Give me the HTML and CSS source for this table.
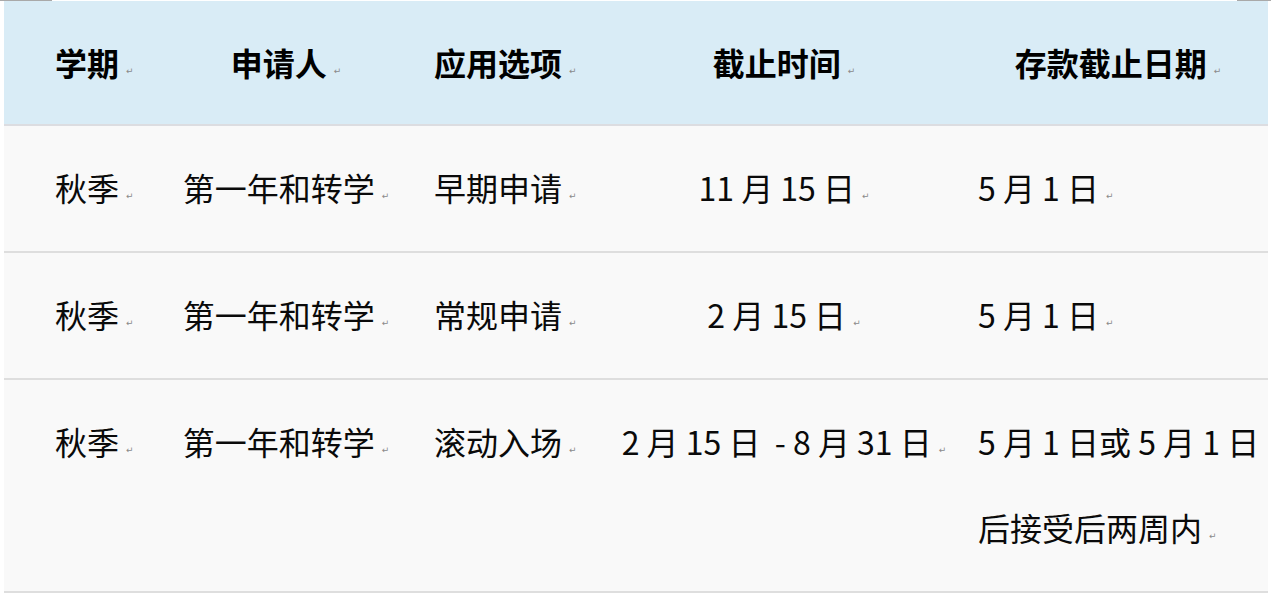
FILE: index.html
```html
<!DOCTYPE html>
<html lang="zh-CN">
<head>
<meta charset="utf-8">
<title>截止日期</title>
<link rel="stylesheet" href="styles.css">
</head>
<body>
<div class="crop crop-left"></div>
<div class="crop crop-right"></div>
<table class="deadlines">
  <colgroup>
    <col class="c1"><col class="c2"><col class="c3"><col class="c4"><col class="c5">
  </colgroup>
  <thead>
    <tr>
      <th class="left1">学期<span class="pm">↵</span></th>
      <th class="center">申请人<span class="pm">↵</span></th>
      <th class="left3">应用选项<span class="pm">↵</span></th>
      <th class="center">截止时间<span class="pm">↵</span></th>
      <th class="head5">存款截止日期<span class="pm">↵</span></th>
    </tr>
  </thead>
  <tbody>
    <tr>
      <td class="left1">秋季<span class="pm">↵</span></td>
      <td class="center">第一年和转学<span class="pm">↵</span></td>
      <td class="left3">早期申请<span class="pm">↵</span></td>
      <td class="center">11 月 15 日<span class="pm">↵</span></td>
      <td class="left5">5 月 1 日<span class="pm">↵</span></td>
    </tr>
    <tr>
      <td class="left1">秋季<span class="pm">↵</span></td>
      <td class="center">第一年和转学<span class="pm">↵</span></td>
      <td class="left3">常规申请<span class="pm">↵</span></td>
      <td class="center">2 月 15 日<span class="pm">↵</span></td>
      <td class="left5">5 月 1 日<span class="pm">↵</span></td>
    </tr>
    <tr>
      <td class="left1">秋季<span class="pm">↵</span></td>
      <td class="center">第一年和转学<span class="pm">↵</span></td>
      <td class="left3">滚动入场<span class="pm">↵</span></td>
      <td class="center">2 月 15 日 &nbsp;- 8 月 31 日<span class="pm">↵</span></td>
      <td class="left5">5 月 1 日或 5 月 1 日<br>后接受后两周内<span class="pm">↵</span></td>
    </tr>
  </tbody>
</table>
</body>
</html>
```

FILE: styles.css
```css
html, body {
  margin: 0;
  padding: 0;
  background: #ffffff;
}

body {
  position: relative;
  width: 1271px;
  height: 596px;
  overflow: hidden;
  font-family: "Noto Sans CJK SC", "Noto Sans", sans-serif;
  color: #000;
}

.crop {
  position: absolute;
  top: 0;
  height: 1px;
  background: #a9a9a9;
}
.crop-left { left: 0; width: 52px; }
.crop-right { left: 1237px; width: 34px; }

.deadlines {
  margin: 1px 0 0 4px;
  width: 1264px;
  table-layout: fixed;
  border-collapse: collapse;
  border-spacing: 0;
}

.c1 { width: 156px; }
.c2 { width: 252px; }
.c3 { width: 192px; }
.c4 { width: 360px; }
.c5 { width: 304px; }

.deadlines th,
.deadlines td {
  font-size: 32px;
  line-height: 86px;
  padding: 18px 0 21px;
  vertical-align: top;
  white-space: normal;
}

.deadlines thead th {
  background: #d9ecf6;
  font-weight: 700;
  padding: 18px 0 19px;
  border-bottom: 2px solid #dcdde1;
}

.deadlines tbody td {
  background: #f9f9f9;
  font-weight: 400;
  color: #0a0a0a;
  border-bottom: 2px solid #dedede;
}

.left1 { text-align: left; padding-left: 51px !important; }
.center { text-align: center; }
.left3 { text-align: left; padding-left: 22px !important; }
.left5 { text-align: left; padding-left: 14px !important; padding-right: 0 !important; }
.head5 { text-align: center; padding-left: 14px !important; padding-right: 10px !important; }

.pm {
  display: inline-block;
  font-family: "DejaVu Sans", sans-serif;
  font-size: 9px;
  line-height: 10px;
  font-weight: 400;
  color: #8a8a8a;
  margin-left: 7px;
  vertical-align: 2px;
}
```
